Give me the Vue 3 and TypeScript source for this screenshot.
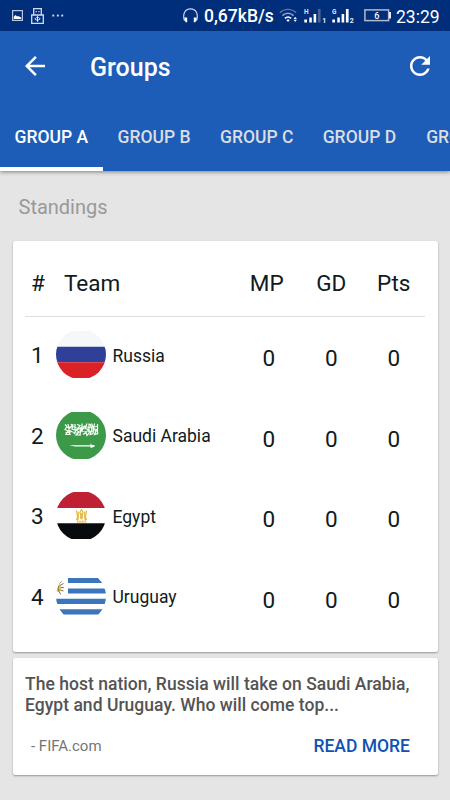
<script setup lang="ts">
interface Standing {
  rank: number
  team: string
  flag: 'ru' | 'sa' | 'eg' | 'uy'
  values: number[]
}

const tabs: string[] = ['GROUP A', 'GROUP B', 'GROUP C', 'GROUP D', 'GROUP E']

const columns: string[] = ['MP', 'GD', 'Pts']

const standings: Standing[] = [
  { rank: 1, team: 'Russia', flag: 'ru', values: [0, 0, 0] },
  { rank: 2, team: 'Saudi Arabia', flag: 'sa', values: [0, 0, 0] },
  { rank: 3, team: 'Egypt', flag: 'eg', values: [0, 0, 0] },
  { rank: 4, team: 'Uruguay', flag: 'uy', values: [0, 0, 0] },
]
</script>

<template>
  <div class="screen">
    <header class="header">
      <div class="status">
        <div class="status-left">
          <svg class="picture" width="11" height="11" viewBox="0 0 11 11">
            <rect x=".6" y=".6" width="9.8" height="9.8" fill="none" stroke="#b9c6df" stroke-width="1.2" />
            <path d="M1.8 9V6.8L3.6 5l1.4 1.6L6 6l3.2 1.6V9z" fill="#fff" />
          </svg>
          <svg class="usb" width="13" height="16" viewBox="0 0 13 16">
            <path d="M2.7 7V.7h7.6V7M.7 7h11.6v8.3H.7z" fill="none" stroke="#d3dbea" stroke-width="1.3" />
            <path d="M4.6 3h1.2v1.3H4.6zM7.3 3h1.2v1.3H7.3z" fill="#d3dbea" />
            <path d="M6.5 8.4v5.4M4.2 9.8v1.5l2.3 1.2 2.3-1.2V9.8M5.3 9.7l1.2-1.2 1.2 1.2" fill="none" stroke="#e4e9f3" stroke-width="1" />
          </svg>
          <svg width="12" height="3" viewBox="0 0 12 3" fill="#d6deed">
            <rect x=".3" y=".6" width="1.9" height="1.9" />
            <rect x="4.9" y=".6" width="1.9" height="1.9" />
            <rect x="9.3" y=".6" width="1.9" height="1.9" />
          </svg>
        </div>
        <div class="status-right">
          <svg class="headset" width="15" height="15" viewBox="0 0 15 15">
            <path d="M1.6 12.8C-.9 6 2.1.9 7.5.9s8.4 5.1 5.9 11.9" fill="none" stroke="#ccd6e8" stroke-width="1.2" />
            <path d="M1.3 9.4h2.9v4.9H2.5zM13.7 9.4h-2.9v4.9h1.7z" fill="#fff" />
          </svg>
          <span class="speed">0,67kB/s</span>
          <svg class="wifi" width="19" height="15" viewBox="0 0 19 15" fill="none">
            <path d="M.9 4.8c4.5-4.6 11.700-4.600 16.200 0" stroke="#5b78aa" stroke-width="1.4" />
            <path d="M3.400 7.600c3.200-3.100 8-3.100 11.200 0" stroke="#8fa4c8" stroke-width="1.500" />
            <path d="M5.900 10.400c1.900-1.700 4.400-1.700 6.200 0" stroke="#fff" stroke-width="1.600" />
            <path d="M7.300 12l1.700-.8 1.700.8L9 14z" fill="#fff" />
            <path d="M16.200 8.800l1.700 2.200h-3.400zM16.200 14l1.700-2.200h-3.400z" fill="#e8edf5" />
          </svg>
          <svg class="signal" width="23" height="16" viewBox="0 0 23 16">
            <text x="0" y="5.500" class="net">H</text>
            <path d="M.3 11.500h2.700v3H.3zM5.300 9.500h2.500v5H5.300zM9.600 6h2.600v8.500H9.600z" fill="#fff" />
            <path d="M13.900 1h2.700v13.500h-2.700z" fill="#466698" />
            <text x="18.200" y="15" class="slot">1</text>
          </svg>
          <svg class="signal second" width="23" height="16" viewBox="0 0 23 16">
            <text x="0" y="5.500" class="net">G</text>
            <path d="M.3 11.500h2.700v3H.3zM5.300 9.500h2.500v5H5.300zM9.600 6h2.600v8.500H9.600zM13.900 1h2.700v13.500h-2.700z" fill="#fff" />
            <text x="17.800" y="15" class="slot">2</text>
          </svg>
          <svg class="battery" width="28" height="13" viewBox="0 0 28 13">
            <rect x=".9" y=".9" width="23.700" height="10.700" fill="none" stroke="#b1b8cf" stroke-width="1.500" />
            <path d="M25 3h2v6.500h-2z" fill="#e8ecf4" />
            <text x="12.700" y="9.500" text-anchor="middle" class="level">6</text>
          </svg>
          <span class="clock">23:29</span>
        </div>
      </div>

      <div class="toolbar">
        <button class="icon-button" aria-label="Back">
          <svg width="30" height="30" viewBox="0 0 24 24" fill="#fff">
            <path d="M20 11H7.830l5.590-5.590L12 4l-8 8 8 8 1.410-1.410L7.830 13H20v-2z" />
          </svg>
        </button>
        <h1 class="title">Groups</h1>
        <button class="icon-button" aria-label="Refresh">
          <svg width="30" height="30" viewBox="0 0 24 24" fill="#fff">
            <path d="M17.650 6.350C16.200 4.900 14.210 4 12 4c-4.420 0-7.990 3.580-7.990 8s3.570 8 7.990 8c3.730 0 6.840-2.550 7.730-6h-2.080c-.82 2.330-3.040 4-5.650 4-3.310 0-6-2.690-6-6s2.690-6 6-6c1.660 0 3.140.69 4.220 1.780L13 11h7V4l-2.350 2.350z" />
          </svg>
        </button>
      </div>

      <nav class="tabs">
        <button v-for="(tab, index) in tabs" :key="tab" class="tab" :class="{ active: index === 0 }">
          {{ tab }}
        </button>
      </nav>
    </header>

    <main class="content">
      <h2 class="section">Standings</h2>

      <section class="card table">
        <div class="row head">
          <span class="rank">#</span>
          <span class="team-head">Team</span>
          <span v-for="column in columns" :key="column" class="cell" :class="column.toLowerCase()">{{ column }}</span>
        </div>
        <div class="rows">
          <div v-for="entry in standings" :key="entry.team" class="row">
            <span class="rank">{{ entry.rank }}</span>
            <svg v-if="entry.flag === 'ru'" class="flag" viewBox="0 0 50 47">
              <path d="M0 0h50v15.700H0z" fill="#f5f7f9" />
              <path d="M0 15.700h50v15.600H0z" fill="#303f98" />
              <path d="M0 31.300h50V47H0z" fill="#da2128" />
            </svg>
            <svg v-else-if="entry.flag === 'sa'" class="flag" viewBox="0 0 50 47">
              <path d="M0 0h50v47H0z" fill="#3c9948" />
              <g fill="none" stroke="#fff" stroke-width="1.200">
                <path d="M9 12.500l2 2-2 3 3 1.500-2 3.500h4l-1-4 3 1M12 12l1 5 3-3-1-2M17 12l-1 5 3 1v-6M18 22l2-4 3 2-3 3h5M21 12.500l3 1-3 4 4-1-1 6M26 11.500v7l3-5M27 22.500l3-2 1 3 3-4-3-2M31 11.500l-2 5 4 1v-6M34 12l2 5-2 5.500 3-1 .500-5-2-5M38.500 11.500l-1 5 3 1-2 5 3-1M41.500 12v10.500" />
                <path d="M9.500 20.500c3 1.500 5-2 7.500-.5s4 1.500 6-.5 4 1 6.500 0 5 1 8-.5 4 .5 4.500 3M11 15.500l6-1 5 2 6-2 5 1 8-1" stroke-width=".9" />
              </g>
              <path d="M13 33.200h21.500v-1.400h1v1.300h2.900v1.900h-2v.7h-1.900v-1.300H19z" fill="#fff" />
            </svg>
            <svg v-else-if="entry.flag === 'eg'" class="flag" viewBox="0 0 50 47">
              <path d="M0 0h50v16H0z" fill="#bf2033" />
              <path d="M0 16h50v15.200H0z" fill="#fff" />
              <path d="M0 31.200h50V47H0z" fill="#080b0e" />
              <g fill="none" stroke="#e5b83c">
                <path d="M20.500 18.500l1 6.500-1 3M22.300 19.500v7l-1 2.500M28.700 19.500v7l1 2.500M30.500 18.500l-1 6.500 1 3" stroke-width="1.100" />
                <path d="M25.500 17v2M24.700 18.500l-1 3M26.300 18.500l1 3M20.500 30h10M24 28.500v1.500M27 28.500v1.500" stroke-width="1.200" />
              </g>
              <path d="M23.900 21h3.200v5l-1.600 2-1.600-2z" fill="#e6bd55" />
            </svg>
            <svg v-else class="flag" viewBox="0 0 50 47">
              <path d="M0 0h50v47H0z" fill="#fff" />
              <path d="M12 5h38v5.100H12zM12 15.400h38v5.200H12zM0 25.700h50v5.200H0zM0 36.200h50v5.200H0z" fill="#3b76bd" />
              <path d="M3 11a4 4 0 000 8c1 0 1.500-.5 1.500-4S4 11 3 11z" fill="#e7bb32" />
              <path d="M3 11l2.500-2.500M4 12.500l3.500-2M4.500 14.700l3.300-.2M4.200 17l3.300 1M3 18.500l1.800 3M2.700 12.500c-1 2-.8 4 .3 5.500" fill="none" stroke="#71602a" stroke-width=".9" />
            </svg>
            <span class="team">{{ entry.team }}</span>
            <span v-for="(value, index) in entry.values" :key="index" class="cell">{{ value }}</span>
          </div>
        </div>
      </section>

      <article class="card news">
        <p class="headline">The host nation, Russia will take on Saudi Arabia, Egypt and Uruguay. Who will come top...</p>
        <footer class="news-footer">
          <span class="source">- FIFA.com</span>
          <button class="read-more">READ MORE</button>
        </footer>
      </article>
    </main>
  </div>
</template>

<style>
body {
  background: #e5e5e5;
}
</style>

<style scoped>
.screen {
  width: 450px;
  height: 800px;
  overflow: hidden;
  background: #e5e5e5;
  font-family: Roboto, sans-serif;
  color: #101a20;
}

.screen *,
.screen *::before {
  box-sizing: border-box;
}

button {
  border: 0;
  padding: 0;
  margin: 0;
  background: none;
  font-family: inherit;
}

svg {
  display: block;
  flex: none;
}

.header {
  height: 171px;
  background: #1d5db7;
  box-shadow: 0 1px 4px rgba(0, 0, 0, 0.45);
}

.status {
  height: 31px;
  display: flex;
  justify-content: space-between;
  align-items: center;
  padding: 0 10px 0 12px;
  background: #002e7a;
  color: #fff;
}

.status-left,
.status-right {
  display: flex;
  align-items: center;
}

.usb {
  margin: 0 7.500px 0 8px;
}

.speed {
  margin-left: 6px;
  width: 70px;
  font-size: 17.500px;
  font-weight: 500;
  line-height: 33px;
  height: 31px;
  white-space: nowrap;
}

.wifi {
  margin-left: 5px;
}

.signal {
  margin-left: 6px;
}

.signal.second {
  margin-left: 5px;
}

.net {
  font: 700 6.500px Roboto, sans-serif;
  fill: #dbe3f0;
}

.slot {
  font: 700 7px Roboto, sans-serif;
  fill: #e8edf5;
}

.battery {
  margin-left: 8.500px;
}

.level {
  font: 500 9px Roboto, sans-serif;
  fill: #fff;
}

.clock {
  margin-left: 4.500px;
  width: 44px;
  font-size: 17.500px;
  line-height: 34px;
  height: 31px;
}

.toolbar {
  height: 70px;
  display: flex;
  align-items: center;
  padding: 0 15px 0 20px;
}

.icon-button {
  width: 30px;
  height: 30px;
}

.title {
  flex: 1;
  margin: 4px 0 0 40px;
  font-size: 25px;
  font-weight: 500;
  line-height: 30px;
  color: #fff;
}

.tabs {
  display: flex;
  height: 70px;
  overflow: hidden;
}

.tab {
  flex: none;
  width: 102.700px;
  height: 70px;
  padding: 5px 0 0;
  border-bottom: 4px solid transparent;
  font-size: 17.500px;
  font-weight: 500;
  color: #dadde3;
  white-space: nowrap;
}

.tab.active {
  color: #fff;
  border-bottom-color: #fff;
}

.content {
  padding: 0 12.500px;
}

.section {
  margin: 0;
  padding: 21px 6px 0;
  height: 70px;
  font-size: 20px;
  font-weight: 400;
  line-height: 30px;
  color: #999;
}

.card {
  background: #fff;
  border-radius: 2.500px;
  box-shadow: 0 1px 2px rgba(0, 0, 0, 0.35);
}

.table {
  height: 411px;
  padding: 0 12.500px;
}

.row {
  display: flex;
  align-items: center;
  height: 76px;
}

.head {
  padding-top: 8px;
  border-bottom: 1px solid #dedede;
  font-size: 22.500px;
}

.rows {
  display: flex;
  flex-direction: column;
  gap: 4.670px;
}

.rank {
  width: 31px;
  padding-left: 6px;
  font-size: 22.500px;
}

.team-head {
  flex: 1;
  padding-left: 8px;
}

.flag {
  width: 50px;
  height: 47px;
  margin-bottom: 1px;
  clip-path: circle(25px at 25px 23.500px);
}

.team {
  flex: 1;
  padding: 1px 0 0 6.500px;
  font-size: 17.500px;
}

.cell {
  width: 62.500px;
  font-size: 22.500px;
  text-align: center;
}

.rows .cell {
  padding-top: 6px;
}

.cell.mp {
  padding-right: 4px;
}

.news {
  margin-top: 6px;
  height: 117px;
  padding: 16px 12.500px 0;
}

.headline {
  margin: 0;
  font-size: 17.500px;
  font-weight: 500;
  line-height: 20.600px;
  letter-spacing: 0.030px;
  color: #545454;
}

.news-footer {
  display: flex;
  justify-content: space-between;
  align-items: center;
  margin-top: 16px;
  height: 30px;
  padding: 0 15px 0 6px;
}

.source {
  font-size: 15px;
  color: #757575;
}

.read-more {
  font-size: 17.500px;
  font-weight: 500;
  color: #0f51b4;
}
</style>
